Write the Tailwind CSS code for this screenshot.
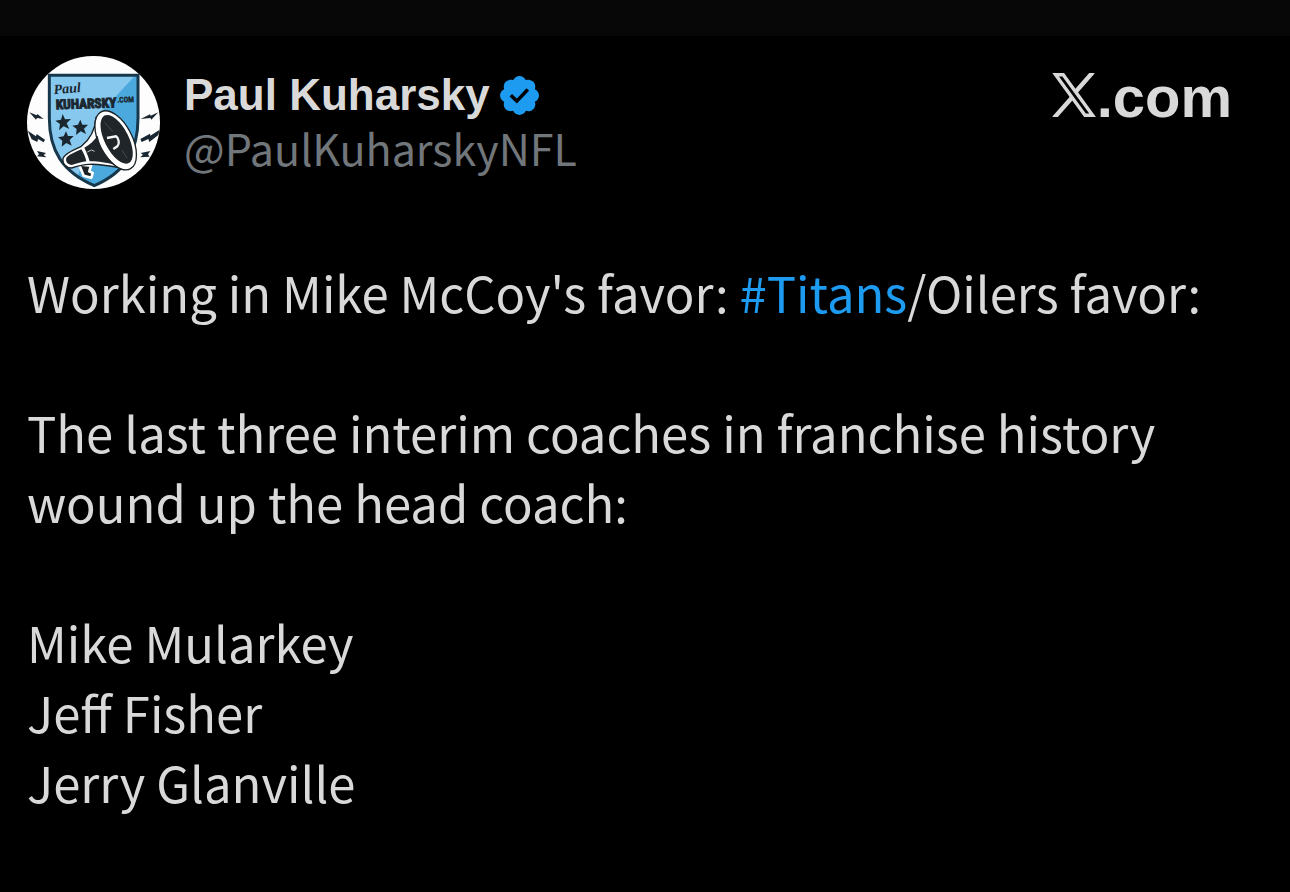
<!DOCTYPE html>
<html lang="en">
<head>
  <meta charset="UTF-8">
  <meta name="viewport" content="width=device-width, initial-scale=1.0">
  <title>Paul Kuharsky on X</title>
  <script src="https://cdn.jsdelivr.net/npm/@tailwindcss/browser@4"></script>
</head>
<body class="bg-black text-[#d9d9d9] font-['Noto_Sans_CJK_JP',sans-serif] min-h-screen">
  <div class="h-9 bg-[#070707]"></div>

  <article class="pt-5 pl-[27px] pr-[58px]">
    <header class="flex items-start gap-6">
      <!-- Avatar -->
      <svg class="size-[133px] shrink-0 rounded-full" viewBox="20 18 399 399" role="img" aria-label="Paul Kuharsky avatar">
        <rect x="20" y="18" width="399" height="399" fill="#fdfdfd"/>
        <path d="M87 76H353V205C353 300 318 365 222 407C125 365 87 300 87 205Z" fill="#87c8ee"/>
        <path d="M353 76V205C353 300 318 365 222 407L170 385L240 190L345 76Z" fill="#4ba9de"/>
        <path d="M87 76H353V205C353 300 318 365 222 407C125 365 87 300 87 205Z" fill="none" stroke="#17384c" stroke-width="9"/>
        <g fill="#1b2730">
          <text x="101" y="133" font-family="Liberation Serif, serif" font-size="42" font-weight="700" font-style="italic" transform="rotate(-5 101 133)">Paul</text>
          <g transform="rotate(-2 108 178)">
            <text x="107" y="178" font-family="Liberation Sans Narrow, Roboto Condensed, Roboto, sans-serif" font-size="40" font-weight="700" stroke="#1b2730" stroke-width="3">KUHARSKY</text>
            <text x="291" y="164" font-family="Liberation Sans Narrow, Roboto Condensed, Roboto, sans-serif" font-size="23" font-weight="700" stroke="#1b2730">.COM</text>
          </g>
          <path d="M127 192l7 16 18-1-13 13 8 17-17-8-14 12 3-19-14-10 17-3z"/>
          <path d="M180 209l6 15 17 0-12 12 6 16-16-8-14 11 2-18-13-10 17-3z"/>
          <path d="M137 244l6 14 17 0-12 12 6 17-16-8-14 11 2-18-13-10 17-3z"/>
          <!-- Lightning bolts -->
          <path d="M27 187L49 196L51 192L70 207L50 204L47 209Z"/>
          <path d="M22 242L47 259L49 252L74 269L70 277L53 267L51 276L34 268Z"/>
          <path d="M50 303L77 309L70 315L78 322L50 319L56 313Z"/>
          <path d="M414 187L391 197L389 193L361 207L390 204L393 209Z"/>
          <path d="M418 239L390 257L389 251L360 267L364 276L384 267L387 276L414 255Z"/>
          <path d="M390 303L361 309L368 314L360 322L388 320L383 313Z"/>
        </g>
        <!-- Megaphone -->
        <path d="M176 343L190 377L213 383L217 369L207 364L212 347Z" fill="#1b2226" stroke="#fff" stroke-width="8" stroke-linejoin="round"/>
        <path d="M227 205C224 240 206 270 183 289C158 301 138 307 129 323C124 340 137 354 154 354C172 348 190 342 208 343C245 341 288 352 322 358Z" fill="#fff" stroke="#1b2226" stroke-width="4"/>
        <ellipse cx="286" cy="271" rx="50" ry="96" transform="rotate(-27 286 271)" fill="#fff" stroke="#1b2226" stroke-width="4"/>
        <ellipse cx="289" cy="268" rx="36" ry="80" transform="rotate(-27 289 268)" fill="#1f2528"/>
        <path d="M232 257C238 291 258 320 284 344C256 337 226 333 208 334C203 317 197 303 192 293C209 284 221 272 232 257Z" fill="#1f2528"/>
        <path d="M183 298C190 309 195 321 198 334C181 337 166 342 154 345C140 343 134 333 139 322C150 311 167 306 183 298Z" fill="#1f2528"/>
        <path d="M260 264L287 259C295 264 299 280 291 289L279 297" fill="none" stroke="#f5f5f5" stroke-width="7"/>
        <path d="M201 306L213 300L223 304" fill="none" stroke="#b9bec1" stroke-width="3"/>
        <path d="M253 218L278 245M305 300L320 325" stroke="#596064" stroke-width="2"/>
      </svg>

      <div class="min-w-0 grow pt-[13px]">
        <div class="flex items-center gap-2.5">
          <h1 class="font-['Liberation_Sans',sans-serif] text-[44px] leading-[52px] font-bold whitespace-nowrap">Paul Kuharsky</h1>
          <svg class="size-[39px] shrink-0" viewBox="1.6 1.6 18.8 18.8" role="img" aria-label="Verified account">
            <path fill="#1d9bf0" d="M20.396 11c-.018-.646-.215-1.275-.57-1.816-.354-.54-.852-.972-1.438-1.246.223-.607.27-1.264.14-1.897-.131-.634-.437-1.218-.882-1.687-.47-.445-1.053-.75-1.687-.882-.633-.13-1.29-.083-1.897.14-.273-.587-.704-1.086-1.245-1.44S11.647 1.62 11 1.604c-.646.017-1.273.213-1.813.568s-.969.854-1.24 1.44c-.608-.223-1.267-.272-1.902-.14-.635.13-1.22.436-1.69.882-.445.47-.749 1.055-.878 1.688-.13.633-.08 1.29.144 1.896-.587.274-1.087.705-1.443 1.245-.356.54-.555 1.17-.574 1.817.02.647.218 1.276.574 1.817.356.54.856.972 1.443 1.245-.224.606-.274 1.263-.144 1.896.13.634.433 1.218.877 1.688.47.443 1.054.747 1.687.878.633.132 1.29.084 1.897-.136.274.586.705 1.084 1.246 1.439.54.354 1.17.551 1.816.569.647-.016 1.276-.213 1.817-.567s.972-.854 1.245-1.44c.604.239 1.266.296 1.903.164.636-.132 1.22-.447 1.68-.907.46-.46.776-1.044.908-1.681s.075-1.299-.165-1.903c.586-.274 1.084-.705 1.439-1.246.354-.54.551-1.17.569-1.816z"/>
            <path fill="none" stroke="#000" stroke-width="1.7" d="M6.8 10.9L9.7 13.7L15 8.1"/>
          </svg>
        </div>
        <a href="#" class="block text-[43px] leading-[52px] text-[#71767b]">@PaulKuharskyNFL</a>
      </div>

      <a href="#" class="flex shrink-0 items-baseline gap-px pt-[11px]" aria-label="X.com">
        <svg class="h-[44px] w-[44px]" viewBox="4 7 44 44" fill="none" stroke="#d9d9d9" aria-hidden="true">
          <path stroke-width="3.4" d="M7.6 8.7H15.2L44.6 49.3H37Z"/>
          <path stroke-width="4.4" d="M45 6L27.5 26M6 52L24.5 31"/>
        </svg>
        <span class="font-['Liberation_Sans',sans-serif] text-[58px] leading-[60px] font-bold">.com</span>
      </a>
    </header>

    <div class="mt-[68px] text-[49px] leading-[70px]">
      <p>Working in Mike McCoy's favor: <a href="#" class="text-[#1d9bf0]">#Titans</a>/Oilers favor:</p>
      <p class="mt-[70px]">The last three interim coaches in franchise history wound up the head coach:</p>
      <p class="mt-[70px]">Mike Mularkey<br>Jeff Fisher<br>Jerry Glanville</p>
    </div>
  </article>
</body>
</html>
